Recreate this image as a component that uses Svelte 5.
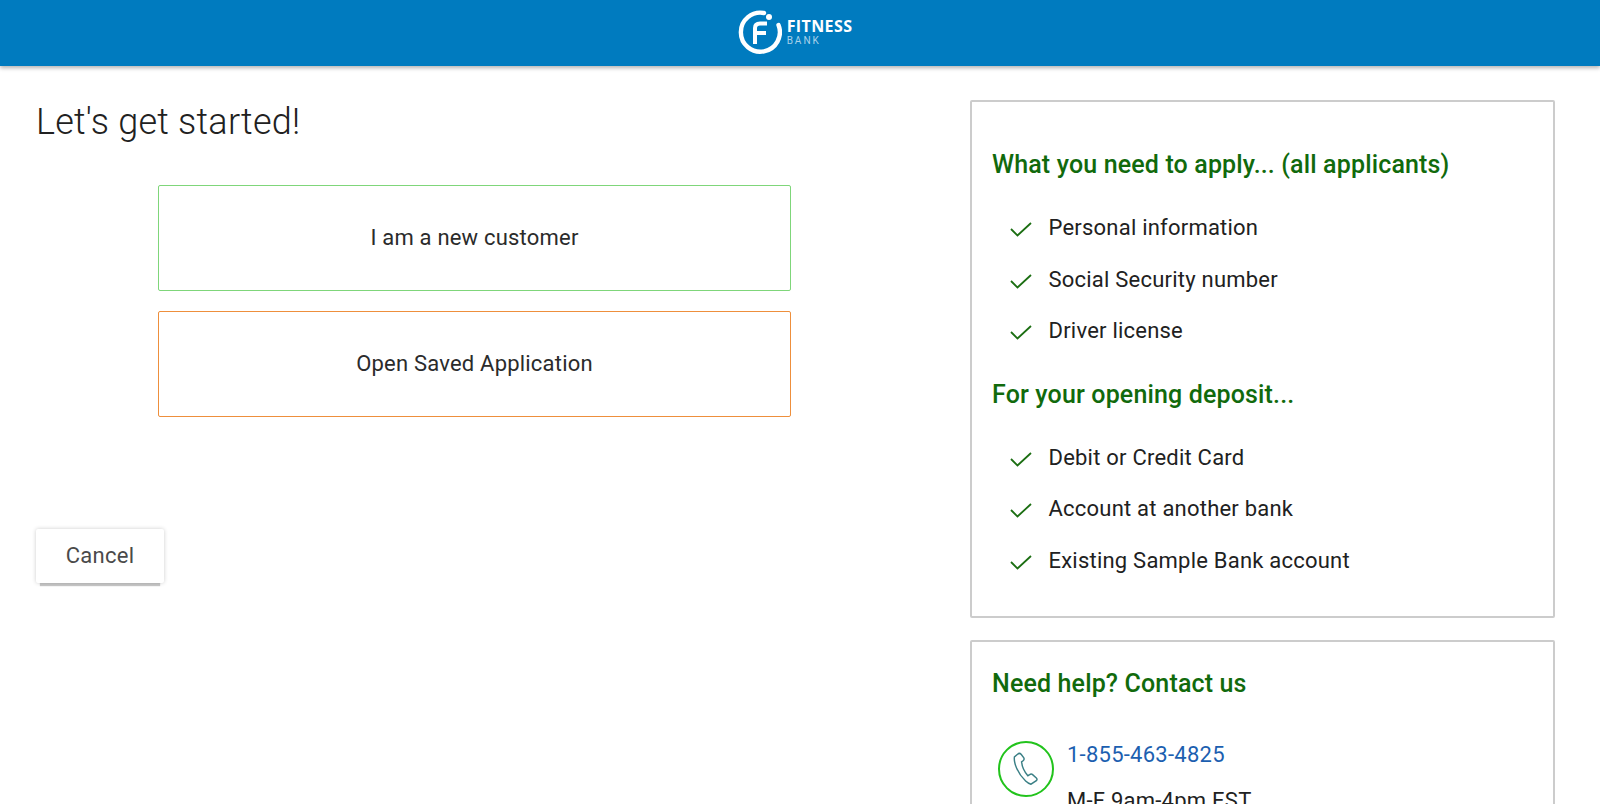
<script>
    const needs = ['Personal information', 'Social Security number', 'Driver license'];
    const deposit = ['Debit or Credit Card', 'Account at another bank', 'Existing Sample Bank account'];
</script>

<header class="topbar">
    <div class="logo">
        <svg width="44" height="44" viewBox="0 0 44 44" fill="none">
            <path d="M26 3A19.5 19.5 0 1 0 40.5 15" stroke="#fff" stroke-width="4.4" stroke-linecap="round" />
            <circle cx="31" cy="7" r="3" fill="#fff" />
            <path d="M17 34V18C17 15 19 13.5 22 13.5H29M17 23H28" stroke="#fff" stroke-width="4" />
        </svg>
        <div class="logo-text">
            <span class="logo-name">FITNESS</span>
            <span class="logo-sub">BANK</span>
        </div>
    </div>
</header>

<main class="page">
    <section class="left">
        <h1>Let's get started!</h1>
        <div class="choices">
            <button class="choice new">I am a new customer</button>
            <button class="choice saved">Open Saved Application</button>
        </div>
        <button class="cancel">Cancel</button>
    </section>

    <aside class="right">
        <div class="card apply">
            <h2>What you need to apply... (all applicants)</h2>
            <ul>
                {#each needs as item}
                    <li>
                        <svg width="24" height="24" viewBox="0 0 24 24" fill="none"><path d="M2 12L8.5 18.5L22 6" stroke="#1b6e12" stroke-width="1.8" /></svg>
                        {item}
                    </li>
                {/each}
            </ul>
            <h2>For your opening deposit...</h2>
            <ul>
                {#each deposit as item}
                    <li>
                        <svg width="24" height="24" viewBox="0 0 24 24" fill="none"><path d="M2 12L8.5 18.5L22 6" stroke="#1b6e12" stroke-width="1.8" /></svg>
                        {item}
                    </li>
                {/each}
            </ul>
        </div>

        <div class="card help">
            <h2>Need help? Contact us</h2>
            <div class="contact">
                <span class="phone-ring">
                    <svg width="27" height="34" viewBox="0 0 30 38" fill="none">
                        <path d="M5 2.5L1.5 5.5C0.5 12 5 24 14 32.5C16 34.5 18 35.5 20 36L26 32C27 31 27 30 26 29L21.5 25C20.5 24.2 19.5 24.5 18.5 25.2L16.5 26.5C13 22.5 10 16 9.5 11L11.5 9.5C12.5 8.5 12.5 7.5 12 6.5L9 2.5C7.8 1.3 6.3 1.3 5 2.5Z" stroke="#3a7f85" stroke-width="1.6" />
                    </svg>
                </span>
                <div class="contact-text">
                    <a href="#top">1-855-463-4825</a>
                    <p>M-F 9am-4pm EST</p>
                </div>
            </div>
        </div>
    </aside>
</main>

<style>
:global(body) {
    margin: 0;
    height: 804px;
    overflow: hidden;
    background: #fff;
    font-family: Roboto, "Liberation Sans", sans-serif;
    color: #212121;
}
.topbar {
    height: 66px;
    background: #007bbf;
    box-shadow: 0 2px 4px rgba(0, 0, 0, 0.3);
    display: flex;
    justify-content: center;
    align-items: center;
    position: relative;
}
.logo {
    display: flex;
    align-items: center;
    gap: 5px;
    margin-top: -3px;
    margin-left: -10px;
}
.logo-text {
    display: flex;
    flex-direction: column;
    margin-top: 1px;
}
.logo-name {
    font-family: "Open Sans", sans-serif;
    font-weight: 700;
    font-size: 16px;
    line-height: 17px;
    color: #fff;
    letter-spacing: 0.4px;
}
.logo-sub {
    font-size: 10px;
    line-height: 12px;
    letter-spacing: 2px;
    color: #a9d2ea;
}
.page {
    display: flex;
    padding: 34px 45px 0 36px;
}
.left {
    width: 934px;
    flex: none;
}
h1 {
    margin: 1px 0 0;
    font-size: 36px;
    font-weight: 300;
    line-height: 42px;
    letter-spacing: 0.22px;
    color: #212121;
}
.choices {
    display: flex;
    flex-direction: column;
    gap: 20px;
    width: 633px;
    margin: 42px 0 0 122px;
}
.choice {
    height: 106px;
    padding: 0 0 2px;
    background: #fff;
    border-radius: 2px;
    font-family: inherit;
    font-size: 22px;
    letter-spacing: 0.2px;
    color: #2b2b2b;
    cursor: pointer;
}
.new {
    border: 1px solid #7fd67a;
}
.saved {
    border: 1px solid #ee8f3c;
}
.cancel {
    display: block;
    margin-top: 112px;
    width: 128px;
    height: 54px;
    padding: 0 0 2px;
    background: #fff;
    border: none;
    border-radius: 2px;
    box-shadow: 0 0 4px rgba(0, 0, 0, 0.2), 0 7px 1px -4px #c8c8c8;
    font-family: inherit;
    font-size: 22px;
    letter-spacing: 0.25px;
    color: #4a4a4a;
    cursor: pointer;
}
.right {
    width: 585px;
    display: flex;
    flex-direction: column;
    gap: 22px;
}
.card {
    border: 2px solid #ccc;
    border-radius: 2px;
    padding: 0 20px;
}
.apply {
    height: 518px;
    box-sizing: border-box;
    padding-top: 48px;
}
.help {
    height: 240px;
    box-sizing: border-box;
    padding-top: 27px;
}
h2 {
    margin: 0;
    font-size: 25px;
    font-weight: 500;
    line-height: 30px;
    letter-spacing: 0.15px;
    color: #116a0c;
}
ul {
    list-style: none;
    margin: 22px 0 23px;
    padding: 0 0 0 17px;
}
li {
    display: flex;
    align-items: center;
    gap: 15.5px;
    height: 51.5px;
    font-size: 22px;
    letter-spacing: 0.22px;
    color: #212121;
}
li svg {
    flex: none;
    margin-top: 3px;
}
.contact {
    display: flex;
    gap: 13px;
    margin: 42px 0 0 6px;
}
.phone-ring {
    flex: none;
    width: 52px;
    height: 52px;
    border: 2px solid #22c31c;
    border-radius: 50%;
    display: flex;
    align-items: center;
    justify-content: center;
}
.contact-text a {
    display: block;
    font-size: 22px;
    line-height: 28px;
    letter-spacing: 0.25px;
    color: #1c5fb0;
    text-decoration: none;
}
.contact-text p {
    margin: 18px 0 0;
    font-size: 22px;
    line-height: 28px;
    letter-spacing: 0.25px;
}
</style>
